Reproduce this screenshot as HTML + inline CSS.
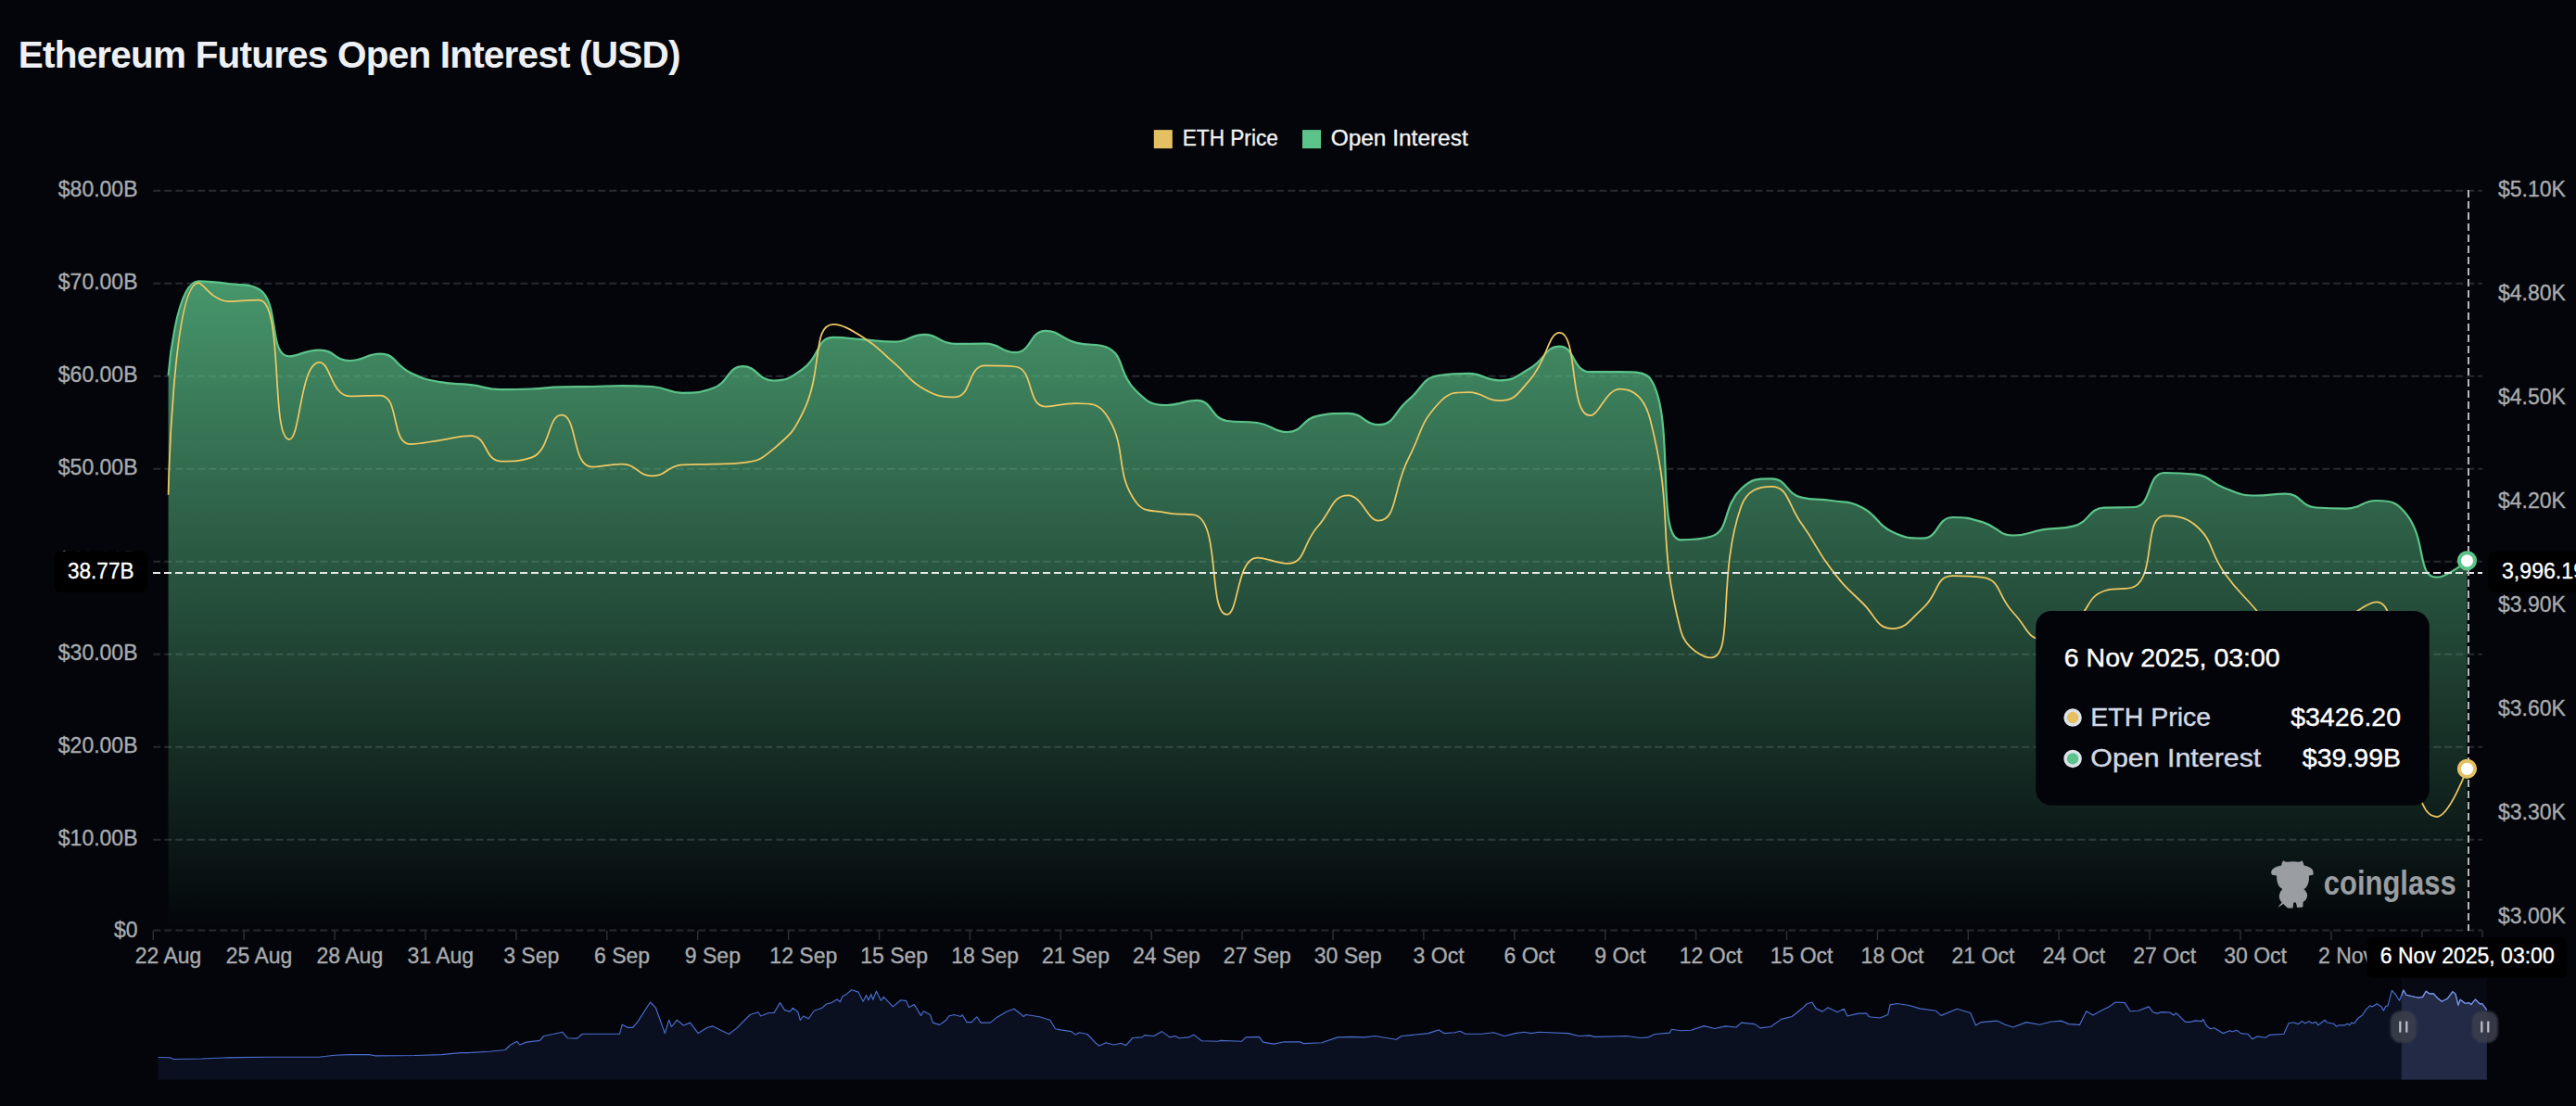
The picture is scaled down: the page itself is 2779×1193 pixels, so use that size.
<!DOCTYPE html>
<html><head><meta charset="utf-8">
<style>
html,body{margin:0;padding:0;background:#03050a;width:2779px;height:1193px;overflow:hidden}
svg{display:block}
text{font-family:"Liberation Sans", sans-serif}
.ax{font-size:23px;fill:#a9abae;stroke:#a9abae;stroke-width:0.35px}
.lb{font-size:24px;fill:#fff;stroke:#fff;stroke-width:0.35px}
.lg{font-size:23.5px;fill:#f2f2f2;stroke:#f2f2f2;stroke-width:0.35px}
.ti{font-size:40.5px;font-weight:bold;fill:#eef0f4;letter-spacing:-0.8px}
.tt{font-size:28.5px;fill:#fff;stroke:#fff;stroke-width:0.4px}
.tn{font-size:28.5px;fill:#d3d9e2;stroke:#d3d9e2;stroke-width:0.4px}
.tv{font-size:28.5px;fill:#fff;stroke:#fff;stroke-width:0.4px}
.wm{font-size:36px;font-weight:bold;fill:#9a9ea2}
</style></head>
<body>
<svg width="2779" height="1193" viewBox="0 0 2779 1193">
<defs>
<filter id="hblur" x="-50%" y="-50%" width="200%" height="200%"><feGaussianBlur stdDeviation="1.2"/></filter>
<linearGradient id="ga" gradientUnits="userSpaceOnUse" x1="0" y1="303.4" x2="0" y2="1004">
<stop offset="0" stop-color="#5cc48a" stop-opacity="0.76"/>
<stop offset="1" stop-color="#5cc48a" stop-opacity="0"/>
</linearGradient>
</defs>
<rect width="2779" height="1193" fill="#03050a"/>
<line x1="165.3" y1="205.7" x2="2678.0" y2="205.7" stroke="#272a30" stroke-width="2" stroke-dasharray="8 4"/>
<line x1="165.3" y1="305.7" x2="2678.0" y2="305.7" stroke="#272a30" stroke-width="2" stroke-dasharray="8 4"/>
<line x1="165.3" y1="405.7" x2="2678.0" y2="405.7" stroke="#272a30" stroke-width="2" stroke-dasharray="8 4"/>
<line x1="165.3" y1="505.7" x2="2678.0" y2="505.7" stroke="#272a30" stroke-width="2" stroke-dasharray="8 4"/>
<line x1="165.3" y1="605.7" x2="2678.0" y2="605.7" stroke="#272a30" stroke-width="2" stroke-dasharray="8 4"/>
<line x1="165.3" y1="705.7" x2="2678.0" y2="705.7" stroke="#272a30" stroke-width="2" stroke-dasharray="8 4"/>
<line x1="165.3" y1="805.7" x2="2678.0" y2="805.7" stroke="#272a30" stroke-width="2" stroke-dasharray="8 4"/>
<line x1="165.3" y1="905.7" x2="2678.0" y2="905.7" stroke="#272a30" stroke-width="2" stroke-dasharray="8 4"/>
<line x1="165.3" y1="1003.6" x2="2678.0" y2="1003.6" stroke="#272a30" stroke-width="2" stroke-dasharray="8 4"/>
<line x1="165.3" y1="1004" x2="165.3" y2="1014" stroke="#2c2f35" stroke-width="1.5"/>
<line x1="263.2" y1="1004" x2="263.2" y2="1014" stroke="#2c2f35" stroke-width="1.5"/>
<line x1="361.1" y1="1004" x2="361.1" y2="1014" stroke="#2c2f35" stroke-width="1.5"/>
<line x1="459.0" y1="1004" x2="459.0" y2="1014" stroke="#2c2f35" stroke-width="1.5"/>
<line x1="556.9" y1="1004" x2="556.9" y2="1014" stroke="#2c2f35" stroke-width="1.5"/>
<line x1="654.8" y1="1004" x2="654.8" y2="1014" stroke="#2c2f35" stroke-width="1.5"/>
<line x1="752.7" y1="1004" x2="752.7" y2="1014" stroke="#2c2f35" stroke-width="1.5"/>
<line x1="850.6" y1="1004" x2="850.6" y2="1014" stroke="#2c2f35" stroke-width="1.5"/>
<line x1="948.5" y1="1004" x2="948.5" y2="1014" stroke="#2c2f35" stroke-width="1.5"/>
<line x1="1046.4" y1="1004" x2="1046.4" y2="1014" stroke="#2c2f35" stroke-width="1.5"/>
<line x1="1144.3" y1="1004" x2="1144.3" y2="1014" stroke="#2c2f35" stroke-width="1.5"/>
<line x1="1242.2" y1="1004" x2="1242.2" y2="1014" stroke="#2c2f35" stroke-width="1.5"/>
<line x1="1340.1" y1="1004" x2="1340.1" y2="1014" stroke="#2c2f35" stroke-width="1.5"/>
<line x1="1438.0" y1="1004" x2="1438.0" y2="1014" stroke="#2c2f35" stroke-width="1.5"/>
<line x1="1535.9" y1="1004" x2="1535.9" y2="1014" stroke="#2c2f35" stroke-width="1.5"/>
<line x1="1633.8" y1="1004" x2="1633.8" y2="1014" stroke="#2c2f35" stroke-width="1.5"/>
<line x1="1731.7" y1="1004" x2="1731.7" y2="1014" stroke="#2c2f35" stroke-width="1.5"/>
<line x1="1829.6" y1="1004" x2="1829.6" y2="1014" stroke="#2c2f35" stroke-width="1.5"/>
<line x1="1927.5" y1="1004" x2="1927.5" y2="1014" stroke="#2c2f35" stroke-width="1.5"/>
<line x1="2025.4" y1="1004" x2="2025.4" y2="1014" stroke="#2c2f35" stroke-width="1.5"/>
<line x1="2123.3" y1="1004" x2="2123.3" y2="1014" stroke="#2c2f35" stroke-width="1.5"/>
<line x1="2221.2" y1="1004" x2="2221.2" y2="1014" stroke="#2c2f35" stroke-width="1.5"/>
<line x1="2319.1" y1="1004" x2="2319.1" y2="1014" stroke="#2c2f35" stroke-width="1.5"/>
<line x1="2417.0" y1="1004" x2="2417.0" y2="1014" stroke="#2c2f35" stroke-width="1.5"/>
<line x1="2514.9" y1="1004" x2="2514.9" y2="1014" stroke="#2c2f35" stroke-width="1.5"/>
<line x1="2612.8" y1="1004" x2="2612.8" y2="1014" stroke="#2c2f35" stroke-width="1.5"/>
<line x1="2678.0" y1="1004" x2="2678.0" y2="1014" stroke="#2c2f35" stroke-width="1.5"/>
<path d="M181.60 404.80 C181.60 404.80 189.27 303.40 214.23 303.40 C221.90 303.40 230.65 303.86 246.86 306.00 C263.28 308.16 269.87 306.00 279.49 312.00 C302.50 326.36 289.14 384.40 312.12 384.40 C321.77 384.40 328.73 377.60 344.75 377.60 C361.36 377.60 360.79 389.00 377.38 389.00 C393.42 389.00 394.83 381.70 410.01 381.70 C427.46 381.70 425.37 393.93 442.64 402.00 C458.00 409.18 458.61 409.07 475.27 412.20 C491.24 415.20 491.64 413.23 507.90 415.20 C524.27 417.18 524.13 420.10 540.53 420.10 C556.76 420.10 556.86 420.10 573.16 419.50 C589.49 418.90 589.46 417.80 605.79 417.40 C622.09 417.00 622.11 417.32 638.42 417.00 C654.74 416.67 654.74 416.10 671.05 416.10 C687.37 416.10 687.54 416.10 703.68 417.00 C720.17 417.92 719.92 423.80 736.31 423.80 C752.55 423.80 754.25 423.80 768.94 418.80 C786.88 412.69 784.35 395.10 801.57 395.10 C816.98 395.10 817.67 410.50 834.20 410.50 C850.30 410.50 852.83 407.40 866.83 397.40 C885.46 384.10 880.26 363.90 899.46 363.90 C912.89 363.90 915.77 365.20 932.09 366.40 C948.40 367.60 948.62 368.70 964.72 368.70 C981.25 368.70 981.18 360.80 997.35 360.80 C1013.81 360.80 1013.29 370.90 1029.98 370.90 C1045.92 370.90 1046.63 370.70 1062.61 370.70 C1079.26 370.70 1080.27 380.20 1095.24 380.20 C1112.90 380.20 1110.45 356.90 1127.87 356.90 C1143.08 356.90 1143.69 365.12 1160.50 369.60 C1176.32 373.82 1181.26 369.60 1193.13 374.30 C1213.89 382.52 1205.68 402.50 1225.76 421.80 C1238.31 433.85 1241.37 437.00 1258.39 437.00 C1274.00 437.00 1276.14 431.90 1291.02 431.90 C1308.77 431.90 1305.81 451.59 1323.65 454.00 C1338.44 456.00 1340.32 454.00 1356.28 456.00 C1372.95 458.09 1373.24 466.00 1388.91 466.00 C1405.87 466.00 1404.25 451.97 1421.54 448.70 C1436.88 445.80 1438.37 445.80 1454.17 445.80 C1471.00 445.80 1472.05 458.20 1486.80 458.20 C1504.68 458.20 1503.04 444.66 1519.43 431.30 C1535.67 418.06 1533.73 407.69 1552.06 405.00 C1566.36 402.90 1568.57 402.90 1584.69 402.90 C1601.20 402.90 1601.37 410.40 1617.32 410.40 C1634.00 410.40 1634.82 406.21 1649.95 397.70 C1667.45 387.86 1666.69 373.70 1682.58 373.70 C1699.32 373.70 1696.72 401.20 1715.21 401.20 C1729.35 401.20 1731.73 401.20 1747.84 401.20 C1764.36 401.20 1775.27 401.20 1780.47 408.70 C1807.90 448.27 1785.58 582.30 1813.10 582.30 C1818.21 582.30 1834.31 582.30 1845.73 578.80 C1866.94 572.30 1857.51 546.78 1878.36 527.30 C1890.14 516.30 1895.57 516.30 1910.99 516.30 C1928.20 516.30 1926.02 532.62 1943.62 536.60 C1958.65 540.00 1960.10 537.30 1976.25 540.00 C1992.73 542.75 1994.39 540.00 2008.88 547.50 C2027.02 556.89 2023.33 565.25 2041.51 573.80 C2055.96 580.60 2059.25 580.60 2074.14 580.60 C2091.88 580.60 2088.97 558.00 2106.77 558.00 C2121.60 558.00 2123.67 558.70 2139.40 563.40 C2156.30 568.45 2155.17 577.50 2172.03 577.50 C2187.80 577.50 2188.25 573.74 2204.66 571.20 C2220.88 568.69 2222.19 571.20 2237.29 567.40 C2254.82 562.99 2252.34 548.52 2269.92 547.70 C2284.97 547.00 2289.56 547.70 2302.55 547.00 C2322.19 545.94 2315.55 510.00 2335.18 510.00 C2348.18 510.00 2352.28 510.00 2367.81 511.60 C2384.91 513.36 2383.56 520.78 2400.44 526.70 C2416.19 532.23 2416.54 534.50 2433.07 534.50 C2449.17 534.50 2450.14 532.60 2465.70 532.60 C2482.77 532.60 2481.25 546.29 2498.33 547.50 C2513.88 548.60 2514.91 548.60 2530.96 548.60 C2547.54 548.60 2547.77 540.00 2563.59 540.00 C2580.40 540.00 2585.69 541.55 2596.22 554.90 C2618.32 582.90 2607.00 622.70 2628.85 622.70 C2639.63 622.70 2661.48 605.00 2661.48 605.00 L2661.48 1004.00 L181.60 1004.00 Z" fill="url(#ga)"/>
<path d="M181.60 404.80 C181.60 404.80 189.27 303.40 214.23 303.40 C221.90 303.40 230.65 303.86 246.86 306.00 C263.28 308.16 269.87 306.00 279.49 312.00 C302.50 326.36 289.14 384.40 312.12 384.40 C321.77 384.40 328.73 377.60 344.75 377.60 C361.36 377.60 360.79 389.00 377.38 389.00 C393.42 389.00 394.83 381.70 410.01 381.70 C427.46 381.70 425.37 393.93 442.64 402.00 C458.00 409.18 458.61 409.07 475.27 412.20 C491.24 415.20 491.64 413.23 507.90 415.20 C524.27 417.18 524.13 420.10 540.53 420.10 C556.76 420.10 556.86 420.10 573.16 419.50 C589.49 418.90 589.46 417.80 605.79 417.40 C622.09 417.00 622.11 417.32 638.42 417.00 C654.74 416.67 654.74 416.10 671.05 416.10 C687.37 416.10 687.54 416.10 703.68 417.00 C720.17 417.92 719.92 423.80 736.31 423.80 C752.55 423.80 754.25 423.80 768.94 418.80 C786.88 412.69 784.35 395.10 801.57 395.10 C816.98 395.10 817.67 410.50 834.20 410.50 C850.30 410.50 852.83 407.40 866.83 397.40 C885.46 384.10 880.26 363.90 899.46 363.90 C912.89 363.90 915.77 365.20 932.09 366.40 C948.40 367.60 948.62 368.70 964.72 368.70 C981.25 368.70 981.18 360.80 997.35 360.80 C1013.81 360.80 1013.29 370.90 1029.98 370.90 C1045.92 370.90 1046.63 370.70 1062.61 370.70 C1079.26 370.70 1080.27 380.20 1095.24 380.20 C1112.90 380.20 1110.45 356.90 1127.87 356.90 C1143.08 356.90 1143.69 365.12 1160.50 369.60 C1176.32 373.82 1181.26 369.60 1193.13 374.30 C1213.89 382.52 1205.68 402.50 1225.76 421.80 C1238.31 433.85 1241.37 437.00 1258.39 437.00 C1274.00 437.00 1276.14 431.90 1291.02 431.90 C1308.77 431.90 1305.81 451.59 1323.65 454.00 C1338.44 456.00 1340.32 454.00 1356.28 456.00 C1372.95 458.09 1373.24 466.00 1388.91 466.00 C1405.87 466.00 1404.25 451.97 1421.54 448.70 C1436.88 445.80 1438.37 445.80 1454.17 445.80 C1471.00 445.80 1472.05 458.20 1486.80 458.20 C1504.68 458.20 1503.04 444.66 1519.43 431.30 C1535.67 418.06 1533.73 407.69 1552.06 405.00 C1566.36 402.90 1568.57 402.90 1584.69 402.90 C1601.20 402.90 1601.37 410.40 1617.32 410.40 C1634.00 410.40 1634.82 406.21 1649.95 397.70 C1667.45 387.86 1666.69 373.70 1682.58 373.70 C1699.32 373.70 1696.72 401.20 1715.21 401.20 C1729.35 401.20 1731.73 401.20 1747.84 401.20 C1764.36 401.20 1775.27 401.20 1780.47 408.70 C1807.90 448.27 1785.58 582.30 1813.10 582.30 C1818.21 582.30 1834.31 582.30 1845.73 578.80 C1866.94 572.30 1857.51 546.78 1878.36 527.30 C1890.14 516.30 1895.57 516.30 1910.99 516.30 C1928.20 516.30 1926.02 532.62 1943.62 536.60 C1958.65 540.00 1960.10 537.30 1976.25 540.00 C1992.73 542.75 1994.39 540.00 2008.88 547.50 C2027.02 556.89 2023.33 565.25 2041.51 573.80 C2055.96 580.60 2059.25 580.60 2074.14 580.60 C2091.88 580.60 2088.97 558.00 2106.77 558.00 C2121.60 558.00 2123.67 558.70 2139.40 563.40 C2156.30 568.45 2155.17 577.50 2172.03 577.50 C2187.80 577.50 2188.25 573.74 2204.66 571.20 C2220.88 568.69 2222.19 571.20 2237.29 567.40 C2254.82 562.99 2252.34 548.52 2269.92 547.70 C2284.97 547.00 2289.56 547.70 2302.55 547.00 C2322.19 545.94 2315.55 510.00 2335.18 510.00 C2348.18 510.00 2352.28 510.00 2367.81 511.60 C2384.91 513.36 2383.56 520.78 2400.44 526.70 C2416.19 532.23 2416.54 534.50 2433.07 534.50 C2449.17 534.50 2450.14 532.60 2465.70 532.60 C2482.77 532.60 2481.25 546.29 2498.33 547.50 C2513.88 548.60 2514.91 548.60 2530.96 548.60 C2547.54 548.60 2547.77 540.00 2563.59 540.00 C2580.40 540.00 2585.69 541.55 2596.22 554.90 C2618.32 582.90 2607.00 622.70 2628.85 622.70 C2639.63 622.70 2661.48 605.00 2661.48 605.00" fill="none" stroke="#5cc48a" stroke-width="2.2" stroke-linejoin="round"/>
<path d="M181.60 533.80 C181.60 533.80 186.24 305.00 214.23 305.00 C218.87 305.00 229.26 325.00 246.86 325.00 C261.89 325.00 273.78 323.50 279.49 323.50 C306.41 323.50 291.47 474.00 312.12 474.00 C324.10 474.00 323.68 390.80 344.75 390.80 C356.31 390.80 357.79 427.40 377.38 427.40 C390.42 427.40 398.73 426.50 410.01 426.50 C431.36 426.50 421.34 479.00 442.64 479.00 C453.97 479.00 458.98 477.05 475.27 474.80 C491.61 472.55 493.68 470.00 507.90 470.00 C526.31 470.00 522.10 497.50 540.53 497.50 C554.73 497.50 561.14 497.50 573.16 493.60 C593.77 486.92 590.60 447.70 605.79 447.70 C623.23 447.70 616.76 503.50 638.42 503.50 C649.39 503.50 655.27 500.70 671.05 500.70 C687.90 500.70 687.32 513.30 703.68 513.30 C719.95 513.30 719.48 501.94 736.31 501.30 C752.11 500.70 752.63 501.25 768.94 500.70 C785.26 500.15 786.00 500.70 801.57 499.10 C818.63 497.35 820.92 495.67 834.20 484.40 C853.55 467.97 855.59 466.86 866.83 443.70 C888.22 399.61 875.47 349.90 899.46 349.90 C908.10 349.90 917.16 355.04 932.09 364.60 C949.79 375.94 948.55 377.98 964.72 391.70 C981.18 405.68 979.01 409.72 997.35 420.00 C1011.64 428.02 1016.37 428.30 1029.98 428.30 C1049.00 428.30 1043.35 394.40 1062.61 394.40 C1075.98 394.40 1082.94 394.40 1095.24 395.50 C1115.57 397.32 1107.58 438.50 1127.87 438.50 C1140.21 438.50 1144.66 435.00 1160.50 435.00 C1177.29 435.00 1184.73 435.00 1193.13 447.10 C1217.36 481.99 1201.47 509.68 1225.76 542.00 C1234.10 553.10 1241.67 549.74 1258.39 553.10 C1274.30 556.30 1283.60 553.10 1291.02 556.30 C1316.23 567.18 1303.55 662.90 1323.65 662.90 C1336.18 662.90 1334.20 601.50 1356.28 601.50 C1366.83 601.50 1376.11 607.80 1388.91 607.80 C1408.74 607.80 1404.46 587.21 1421.54 568.00 C1437.09 550.51 1437.06 534.40 1454.17 534.40 C1469.69 534.40 1474.95 561.60 1486.80 561.60 C1507.58 561.60 1502.36 527.71 1519.43 494.60 C1534.99 464.41 1530.47 458.45 1552.06 435.00 C1563.10 423.00 1568.16 423.00 1584.69 423.00 C1600.79 423.00 1602.19 432.10 1617.32 432.10 C1634.82 432.10 1637.18 424.72 1649.95 410.40 C1669.81 388.12 1669.83 358.90 1682.58 358.90 C1702.46 358.90 1692.79 448.20 1715.21 448.20 C1725.42 448.20 1732.17 419.70 1747.84 419.70 C1764.80 419.70 1774.92 431.27 1780.47 453.40 C1807.55 561.42 1785.72 572.60 1813.10 680.00 C1818.35 700.60 1838.92 709.40 1845.73 709.40 C1871.55 709.40 1851.92 620.95 1878.36 546.20 C1884.55 528.70 1896.98 524.90 1910.99 524.90 C1929.61 524.90 1928.44 544.17 1943.62 565.10 C1961.07 589.17 1958.17 591.38 1976.25 614.90 C1990.80 633.83 1991.68 633.37 2008.88 650.00 C2024.31 664.92 2024.44 678.00 2041.51 678.00 C2057.07 678.00 2059.49 669.10 2074.14 656.30 C2092.12 640.60 2087.35 621.00 2106.77 621.00 C2119.98 621.00 2126.53 621.00 2139.40 622.90 C2159.16 625.82 2154.58 643.06 2172.03 661.00 C2187.21 676.61 2187.06 690.00 2204.66 690.00 C2219.69 690.00 2222.94 683.54 2237.29 672.00 C2255.57 657.29 2250.66 644.27 2269.92 637.50 C2283.29 632.80 2293.28 637.50 2302.55 632.80 C2325.91 620.96 2312.03 556.40 2335.18 556.40 C2344.66 556.40 2356.28 556.40 2367.81 566.00 C2388.91 583.57 2382.36 593.79 2400.44 619.00 C2414.99 639.29 2416.76 638.00 2433.07 657.00 C2449.39 676.00 2446.03 687.41 2465.70 695.00 C2478.66 700.00 2484.65 700.00 2498.33 700.00 C2517.28 700.00 2513.05 681.89 2530.96 668.00 C2545.68 656.59 2557.20 649.40 2563.59 649.40 C2589.83 649.40 2575.39 726.09 2596.22 800.00 C2608.02 841.89 2609.66 881.00 2628.85 881.00 C2642.29 881.00 2661.48 829.30 2661.48 829.30" fill="none" stroke="#f0c862" stroke-width="1.75" stroke-linejoin="round"/>
<text x="148.5" y="211.7" text-anchor="end" class="ax">$80.00B</text>
<text x="148.5" y="311.7" text-anchor="end" class="ax">$70.00B</text>
<text x="148.5" y="411.7" text-anchor="end" class="ax">$60.00B</text>
<text x="148.5" y="511.7" text-anchor="end" class="ax">$50.00B</text>
<text x="148.5" y="611.7" text-anchor="end" class="ax">$40.00B</text>
<text x="148.5" y="711.7" text-anchor="end" class="ax">$30.00B</text>
<text x="148.5" y="811.7" text-anchor="end" class="ax">$20.00B</text>
<text x="148.5" y="911.7" text-anchor="end" class="ax">$10.00B</text>
<text x="148.5" y="1011.0" text-anchor="end" class="ax">$0</text>
<text x="2695" y="211.5" class="ax">$5.10K</text>
<text x="2695" y="323.5" class="ax">$4.80K</text>
<text x="2695" y="435.5" class="ax">$4.50K</text>
<text x="2695" y="547.5" class="ax">$4.20K</text>
<text x="2695" y="659.5" class="ax">$3.90K</text>
<text x="2695" y="771.5" class="ax">$3.60K</text>
<text x="2695" y="883.5" class="ax">$3.30K</text>
<text x="2695" y="995.5" class="ax">$3.00K</text>
<text x="181.6" y="1038.7" text-anchor="middle" class="ax">22 Aug</text>
<text x="279.5" y="1038.7" text-anchor="middle" class="ax">25 Aug</text>
<text x="377.4" y="1038.7" text-anchor="middle" class="ax">28 Aug</text>
<text x="475.3" y="1038.7" text-anchor="middle" class="ax">31 Aug</text>
<text x="573.2" y="1038.7" text-anchor="middle" class="ax">3 Sep</text>
<text x="671.1" y="1038.7" text-anchor="middle" class="ax">6 Sep</text>
<text x="768.9" y="1038.7" text-anchor="middle" class="ax">9 Sep</text>
<text x="866.8" y="1038.7" text-anchor="middle" class="ax">12 Sep</text>
<text x="964.7" y="1038.7" text-anchor="middle" class="ax">15 Sep</text>
<text x="1062.6" y="1038.7" text-anchor="middle" class="ax">18 Sep</text>
<text x="1160.5" y="1038.7" text-anchor="middle" class="ax">21 Sep</text>
<text x="1258.4" y="1038.7" text-anchor="middle" class="ax">24 Sep</text>
<text x="1356.3" y="1038.7" text-anchor="middle" class="ax">27 Sep</text>
<text x="1454.2" y="1038.7" text-anchor="middle" class="ax">30 Sep</text>
<text x="1552.1" y="1038.7" text-anchor="middle" class="ax">3 Oct</text>
<text x="1650.0" y="1038.7" text-anchor="middle" class="ax">6 Oct</text>
<text x="1747.8" y="1038.7" text-anchor="middle" class="ax">9 Oct</text>
<text x="1845.7" y="1038.7" text-anchor="middle" class="ax">12 Oct</text>
<text x="1943.6" y="1038.7" text-anchor="middle" class="ax">15 Oct</text>
<text x="2041.5" y="1038.7" text-anchor="middle" class="ax">18 Oct</text>
<text x="2139.4" y="1038.7" text-anchor="middle" class="ax">21 Oct</text>
<text x="2237.3" y="1038.7" text-anchor="middle" class="ax">24 Oct</text>
<text x="2335.2" y="1038.7" text-anchor="middle" class="ax">27 Oct</text>
<text x="2433.1" y="1038.7" text-anchor="middle" class="ax">30 Oct</text>
<text x="2531.0" y="1038.7" text-anchor="middle" class="ax">2 Nov</text>
<clipPath id="selclip"><rect x="2590.7" y="1040" width="92.2" height="140"/></clipPath>
<path d="M170.6 1140.5 L183.0 1140.8 L187.3 1142.5 L217.5 1142.0 L246.2 1140.8 L289.3 1140.2 L343.9 1140.2 L361.1 1138.2 L375.5 1137.6 L398.4 1137.6 L404.2 1138.8 L447.3 1138.5 L476.0 1137.6 L496.1 1135.6 L504.7 1135.6 L527.7 1134.2 L545.0 1132.5 L550.7 1127.0 L557.9 1123.3 L560.7 1127.0 L567.9 1124.1 L582.3 1122.4 L586.6 1117.5 L596.7 1115.5 L606.7 1113.2 L612.5 1119.8 L622.5 1120.1 L628.3 1115.2 L668.5 1115.2 L671.3 1105.2 L677.1 1108.3 L682.8 1108.3 L688.6 1101.1 L701.5 1081.0 L707.3 1086.8 L717.3 1114.6 L721.6 1100.3 L724.5 1107.5 L730.2 1100.3 L737.4 1106.0 L744.6 1103.1 L753.2 1114.6 L763.3 1108.3 L769.0 1106.9 L786.3 1115.5 L794.9 1108.9 L809.2 1094.5 L817.9 1091.7 L820.7 1096.0 L829.3 1092.5 L835.1 1092.5 L841.4 1081.6 L846.6 1089.6 L852.3 1091.1 L855.2 1087.3 L860.9 1091.7 L863.2 1100.3 L866.7 1096.0 L872.4 1098.8 L878.2 1090.2 L886.8 1087.3 L891.5 1083.0 L897.2 1081.6 L903.0 1077.9 L906.4 1080.7 L908.7 1075.0 L913.0 1072.4 L918.8 1067.8 L926.0 1070.1 L931.1 1080.2 L934.6 1073.6 L936.9 1078.7 L939.8 1072.4 L941.8 1078.2 L945.5 1069.2 L950.4 1079.3 L953.3 1075.3 L963.3 1085.9 L971.9 1078.7 L977.7 1079.6 L980.5 1086.5 L986.3 1083.6 L993.5 1095.4 L996.3 1090.8 L1003.5 1094.5 L1006.4 1103.1 L1013.6 1105.4 L1020.8 1100.3 L1023.6 1096.0 L1029.4 1094.5 L1036.6 1096.5 L1038.0 1094.5 L1043.2 1102.6 L1048.1 1102.6 L1053.8 1096.8 L1058.1 1103.1 L1068.2 1103.1 L1075.3 1097.4 L1086.8 1090.8 L1094.0 1088.2 L1101.2 1093.7 L1104.1 1096.5 L1106.9 1094.5 L1121.3 1096.8 L1132.8 1100.3 L1138.5 1109.8 L1144.3 1110.9 L1155.8 1112.6 L1160.1 1116.1 L1164.4 1113.8 L1173.0 1115.5 L1181.6 1124.7 L1185.9 1128.1 L1193.1 1124.7 L1201.7 1127.0 L1208.9 1125.3 L1214.7 1127.6 L1221.9 1119.5 L1231.9 1118.9 L1234.8 1116.6 L1244.8 1117.5 L1253.5 1112.6 L1262.1 1118.9 L1267.8 1117.5 L1272.1 1119.8 L1282.2 1118.9 L1287.9 1116.1 L1296.5 1122.7 L1313.8 1123.3 L1316.7 1122.4 L1339.6 1123.3 L1343.9 1118.9 L1358.3 1118.4 L1362.6 1124.1 L1374.1 1126.1 L1385.6 1123.8 L1402.8 1123.8 L1405.7 1125.6 L1425.8 1124.7 L1443.0 1118.9 L1457.4 1118.4 L1471.8 1118.9 L1483.3 1117.5 L1506.2 1121.2 L1512.0 1117.5 L1540.7 1114.6 L1552.2 1110.9 L1557.9 1114.6 L1569.4 1113.8 L1575.2 1112.3 L1580.9 1115.2 L1598.2 1115.2 L1611.5 1113.8 L1623.0 1117.5 L1634.5 1114.6 L1644.5 1113.2 L1651.7 1114.6 L1660.3 1113.2 L1691.9 1114.6 L1703.4 1117.5 L1714.9 1116.9 L1720.7 1118.4 L1755.1 1117.5 L1769.5 1119.5 L1778.1 1118.9 L1785.3 1115.5 L1801.1 1114.1 L1803.4 1110.3 L1812.6 1111.8 L1824.1 1111.2 L1838.4 1106.6 L1849.9 1109.5 L1861.4 1106.9 L1872.9 1108.0 L1878.7 1103.1 L1893.0 1104.6 L1898.8 1108.9 L1910.3 1107.5 L1921.7 1099.4 L1933.2 1096.5 L1944.7 1087.3 L1949.0 1083.0 L1954.8 1081.0 L1959.1 1087.9 L1966.3 1091.1 L1972.0 1086.8 L1982.1 1091.7 L1989.3 1088.2 L1993.0 1096.0 L2005.0 1093.1 L2013.7 1093.1 L2016.5 1096.8 L2028.0 1098.0 L2036.7 1094.5 L2039.0 1083.9 L2046.7 1082.5 L2059.6 1084.5 L2071.1 1087.9 L2088.4 1090.2 L2094.1 1095.4 L2111.3 1088.2 L2125.7 1092.5 L2131.5 1106.0 L2137.2 1102.6 L2154.4 1101.1 L2163.1 1105.2 L2171.7 1108.0 L2186.0 1102.6 L2200.4 1105.2 L2211.9 1102.3 L2223.4 1101.1 L2232.0 1104.6 L2243.5 1105.4 L2250.7 1090.8 L2257.9 1095.1 L2266.5 1090.2 L2275.1 1085.9 L2282.3 1081.0 L2292.3 1081.6 L2298.1 1090.8 L2306.7 1090.2 L2318.2 1085.9 L2322.5 1091.7 L2327.4 1093.1 L2331.8 1091.6 L2340.7 1092.0 L2345.1 1095.0 L2347.3 1092.8 L2349.5 1094.3 L2357.6 1102.4 L2362.8 1102.4 L2368.7 1100.9 L2375.3 1101.6 L2376.8 1099.4 L2380.5 1106.8 L2384.9 1109.7 L2388.6 1108.7 L2398.2 1114.6 L2405.6 1111.7 L2408.5 1112.7 L2412.9 1111.2 L2418.1 1114.9 L2424.7 1115.2 L2429.9 1120.8 L2435.1 1117.9 L2443.9 1119.3 L2448.3 1116.4 L2463.8 1115.3 L2469.0 1103.8 L2474.2 1102.8 L2479.3 1104.6 L2483.7 1101.6 L2486.7 1103.8 L2491.1 1101.6 L2494.1 1103.8 L2498.5 1102.4 L2500.7 1105.8 L2508.1 1100.2 L2510.3 1102.8 L2517.7 1104.3 L2520.6 1107.2 L2523.6 1105.8 L2529.5 1105.8 L2532.4 1104.3 L2534.6 1105.8 L2536.8 1103.1 L2539.8 1103.8 L2544.2 1097.9 L2548.6 1095.0 L2552.3 1089.1 L2556.8 1084.7 L2559.0 1086.1 L2564.1 1082.7 L2568.6 1085.4 L2571.5 1090.1 L2573.7 1085.4 L2575.9 1085.1 L2580.4 1068.4 L2584.8 1073.3 L2588.5 1079.2 L2592.9 1068.0 L2595.9 1073.3 L2600.3 1074.3 L2609.1 1076.3 L2613.6 1075.4 L2617.2 1069.2 L2620.9 1071.8 L2625.4 1071.8 L2629.8 1076.8 L2634.2 1080.2 L2640.1 1077.3 L2646.0 1069.6 L2649.0 1072.1 L2651.9 1084.2 L2654.1 1078.3 L2659.3 1082.2 L2663.7 1081.7 L2665.9 1083.6 L2670.3 1078.0 L2675.5 1083.2 L2677.7 1082.5 L2682.9 1089.5 L2682.9 1164.6 L170.6 1164.6 Z" fill="#0b1020"/>
<rect x="2590.7" y="1055.2" width="92.2" height="109.4" fill="#8090ff" fill-opacity="0.04"/>
<path d="M170.6 1140.5 L183.0 1140.8 L187.3 1142.5 L217.5 1142.0 L246.2 1140.8 L289.3 1140.2 L343.9 1140.2 L361.1 1138.2 L375.5 1137.6 L398.4 1137.6 L404.2 1138.8 L447.3 1138.5 L476.0 1137.6 L496.1 1135.6 L504.7 1135.6 L527.7 1134.2 L545.0 1132.5 L550.7 1127.0 L557.9 1123.3 L560.7 1127.0 L567.9 1124.1 L582.3 1122.4 L586.6 1117.5 L596.7 1115.5 L606.7 1113.2 L612.5 1119.8 L622.5 1120.1 L628.3 1115.2 L668.5 1115.2 L671.3 1105.2 L677.1 1108.3 L682.8 1108.3 L688.6 1101.1 L701.5 1081.0 L707.3 1086.8 L717.3 1114.6 L721.6 1100.3 L724.5 1107.5 L730.2 1100.3 L737.4 1106.0 L744.6 1103.1 L753.2 1114.6 L763.3 1108.3 L769.0 1106.9 L786.3 1115.5 L794.9 1108.9 L809.2 1094.5 L817.9 1091.7 L820.7 1096.0 L829.3 1092.5 L835.1 1092.5 L841.4 1081.6 L846.6 1089.6 L852.3 1091.1 L855.2 1087.3 L860.9 1091.7 L863.2 1100.3 L866.7 1096.0 L872.4 1098.8 L878.2 1090.2 L886.8 1087.3 L891.5 1083.0 L897.2 1081.6 L903.0 1077.9 L906.4 1080.7 L908.7 1075.0 L913.0 1072.4 L918.8 1067.8 L926.0 1070.1 L931.1 1080.2 L934.6 1073.6 L936.9 1078.7 L939.8 1072.4 L941.8 1078.2 L945.5 1069.2 L950.4 1079.3 L953.3 1075.3 L963.3 1085.9 L971.9 1078.7 L977.7 1079.6 L980.5 1086.5 L986.3 1083.6 L993.5 1095.4 L996.3 1090.8 L1003.5 1094.5 L1006.4 1103.1 L1013.6 1105.4 L1020.8 1100.3 L1023.6 1096.0 L1029.4 1094.5 L1036.6 1096.5 L1038.0 1094.5 L1043.2 1102.6 L1048.1 1102.6 L1053.8 1096.8 L1058.1 1103.1 L1068.2 1103.1 L1075.3 1097.4 L1086.8 1090.8 L1094.0 1088.2 L1101.2 1093.7 L1104.1 1096.5 L1106.9 1094.5 L1121.3 1096.8 L1132.8 1100.3 L1138.5 1109.8 L1144.3 1110.9 L1155.8 1112.6 L1160.1 1116.1 L1164.4 1113.8 L1173.0 1115.5 L1181.6 1124.7 L1185.9 1128.1 L1193.1 1124.7 L1201.7 1127.0 L1208.9 1125.3 L1214.7 1127.6 L1221.9 1119.5 L1231.9 1118.9 L1234.8 1116.6 L1244.8 1117.5 L1253.5 1112.6 L1262.1 1118.9 L1267.8 1117.5 L1272.1 1119.8 L1282.2 1118.9 L1287.9 1116.1 L1296.5 1122.7 L1313.8 1123.3 L1316.7 1122.4 L1339.6 1123.3 L1343.9 1118.9 L1358.3 1118.4 L1362.6 1124.1 L1374.1 1126.1 L1385.6 1123.8 L1402.8 1123.8 L1405.7 1125.6 L1425.8 1124.7 L1443.0 1118.9 L1457.4 1118.4 L1471.8 1118.9 L1483.3 1117.5 L1506.2 1121.2 L1512.0 1117.5 L1540.7 1114.6 L1552.2 1110.9 L1557.9 1114.6 L1569.4 1113.8 L1575.2 1112.3 L1580.9 1115.2 L1598.2 1115.2 L1611.5 1113.8 L1623.0 1117.5 L1634.5 1114.6 L1644.5 1113.2 L1651.7 1114.6 L1660.3 1113.2 L1691.9 1114.6 L1703.4 1117.5 L1714.9 1116.9 L1720.7 1118.4 L1755.1 1117.5 L1769.5 1119.5 L1778.1 1118.9 L1785.3 1115.5 L1801.1 1114.1 L1803.4 1110.3 L1812.6 1111.8 L1824.1 1111.2 L1838.4 1106.6 L1849.9 1109.5 L1861.4 1106.9 L1872.9 1108.0 L1878.7 1103.1 L1893.0 1104.6 L1898.8 1108.9 L1910.3 1107.5 L1921.7 1099.4 L1933.2 1096.5 L1944.7 1087.3 L1949.0 1083.0 L1954.8 1081.0 L1959.1 1087.9 L1966.3 1091.1 L1972.0 1086.8 L1982.1 1091.7 L1989.3 1088.2 L1993.0 1096.0 L2005.0 1093.1 L2013.7 1093.1 L2016.5 1096.8 L2028.0 1098.0 L2036.7 1094.5 L2039.0 1083.9 L2046.7 1082.5 L2059.6 1084.5 L2071.1 1087.9 L2088.4 1090.2 L2094.1 1095.4 L2111.3 1088.2 L2125.7 1092.5 L2131.5 1106.0 L2137.2 1102.6 L2154.4 1101.1 L2163.1 1105.2 L2171.7 1108.0 L2186.0 1102.6 L2200.4 1105.2 L2211.9 1102.3 L2223.4 1101.1 L2232.0 1104.6 L2243.5 1105.4 L2250.7 1090.8 L2257.9 1095.1 L2266.5 1090.2 L2275.1 1085.9 L2282.3 1081.0 L2292.3 1081.6 L2298.1 1090.8 L2306.7 1090.2 L2318.2 1085.9 L2322.5 1091.7 L2327.4 1093.1 L2331.8 1091.6 L2340.7 1092.0 L2345.1 1095.0 L2347.3 1092.8 L2349.5 1094.3 L2357.6 1102.4 L2362.8 1102.4 L2368.7 1100.9 L2375.3 1101.6 L2376.8 1099.4 L2380.5 1106.8 L2384.9 1109.7 L2388.6 1108.7 L2398.2 1114.6 L2405.6 1111.7 L2408.5 1112.7 L2412.9 1111.2 L2418.1 1114.9 L2424.7 1115.2 L2429.9 1120.8 L2435.1 1117.9 L2443.9 1119.3 L2448.3 1116.4 L2463.8 1115.3 L2469.0 1103.8 L2474.2 1102.8 L2479.3 1104.6 L2483.7 1101.6 L2486.7 1103.8 L2491.1 1101.6 L2494.1 1103.8 L2498.5 1102.4 L2500.7 1105.8 L2508.1 1100.2 L2510.3 1102.8 L2517.7 1104.3 L2520.6 1107.2 L2523.6 1105.8 L2529.5 1105.8 L2532.4 1104.3 L2534.6 1105.8 L2536.8 1103.1 L2539.8 1103.8 L2544.2 1097.9 L2548.6 1095.0 L2552.3 1089.1 L2556.8 1084.7 L2559.0 1086.1 L2564.1 1082.7 L2568.6 1085.4 L2571.5 1090.1 L2573.7 1085.4 L2575.9 1085.1 L2580.4 1068.4 L2584.8 1073.3 L2588.5 1079.2 L2592.9 1068.0 L2595.9 1073.3 L2600.3 1074.3 L2609.1 1076.3 L2613.6 1075.4 L2617.2 1069.2 L2620.9 1071.8 L2625.4 1071.8 L2629.8 1076.8 L2634.2 1080.2 L2640.1 1077.3 L2646.0 1069.6 L2649.0 1072.1 L2651.9 1084.2 L2654.1 1078.3 L2659.3 1082.2 L2663.7 1081.7 L2665.9 1083.6 L2670.3 1078.0 L2675.5 1083.2 L2677.7 1082.5 L2682.9 1089.5 L2682.9 1164.6 L170.6 1164.6 Z" fill="#232a46" clip-path="url(#selclip)"/>
<path d="M170.6 1140.5 L183.0 1140.8 L187.3 1142.5 L217.5 1142.0 L246.2 1140.8 L289.3 1140.2 L343.9 1140.2 L361.1 1138.2 L375.5 1137.6 L398.4 1137.6 L404.2 1138.8 L447.3 1138.5 L476.0 1137.6 L496.1 1135.6 L504.7 1135.6 L527.7 1134.2 L545.0 1132.5 L550.7 1127.0 L557.9 1123.3 L560.7 1127.0 L567.9 1124.1 L582.3 1122.4 L586.6 1117.5 L596.7 1115.5 L606.7 1113.2 L612.5 1119.8 L622.5 1120.1 L628.3 1115.2 L668.5 1115.2 L671.3 1105.2 L677.1 1108.3 L682.8 1108.3 L688.6 1101.1 L701.5 1081.0 L707.3 1086.8 L717.3 1114.6 L721.6 1100.3 L724.5 1107.5 L730.2 1100.3 L737.4 1106.0 L744.6 1103.1 L753.2 1114.6 L763.3 1108.3 L769.0 1106.9 L786.3 1115.5 L794.9 1108.9 L809.2 1094.5 L817.9 1091.7 L820.7 1096.0 L829.3 1092.5 L835.1 1092.5 L841.4 1081.6 L846.6 1089.6 L852.3 1091.1 L855.2 1087.3 L860.9 1091.7 L863.2 1100.3 L866.7 1096.0 L872.4 1098.8 L878.2 1090.2 L886.8 1087.3 L891.5 1083.0 L897.2 1081.6 L903.0 1077.9 L906.4 1080.7 L908.7 1075.0 L913.0 1072.4 L918.8 1067.8 L926.0 1070.1 L931.1 1080.2 L934.6 1073.6 L936.9 1078.7 L939.8 1072.4 L941.8 1078.2 L945.5 1069.2 L950.4 1079.3 L953.3 1075.3 L963.3 1085.9 L971.9 1078.7 L977.7 1079.6 L980.5 1086.5 L986.3 1083.6 L993.5 1095.4 L996.3 1090.8 L1003.5 1094.5 L1006.4 1103.1 L1013.6 1105.4 L1020.8 1100.3 L1023.6 1096.0 L1029.4 1094.5 L1036.6 1096.5 L1038.0 1094.5 L1043.2 1102.6 L1048.1 1102.6 L1053.8 1096.8 L1058.1 1103.1 L1068.2 1103.1 L1075.3 1097.4 L1086.8 1090.8 L1094.0 1088.2 L1101.2 1093.7 L1104.1 1096.5 L1106.9 1094.5 L1121.3 1096.8 L1132.8 1100.3 L1138.5 1109.8 L1144.3 1110.9 L1155.8 1112.6 L1160.1 1116.1 L1164.4 1113.8 L1173.0 1115.5 L1181.6 1124.7 L1185.9 1128.1 L1193.1 1124.7 L1201.7 1127.0 L1208.9 1125.3 L1214.7 1127.6 L1221.9 1119.5 L1231.9 1118.9 L1234.8 1116.6 L1244.8 1117.5 L1253.5 1112.6 L1262.1 1118.9 L1267.8 1117.5 L1272.1 1119.8 L1282.2 1118.9 L1287.9 1116.1 L1296.5 1122.7 L1313.8 1123.3 L1316.7 1122.4 L1339.6 1123.3 L1343.9 1118.9 L1358.3 1118.4 L1362.6 1124.1 L1374.1 1126.1 L1385.6 1123.8 L1402.8 1123.8 L1405.7 1125.6 L1425.8 1124.7 L1443.0 1118.9 L1457.4 1118.4 L1471.8 1118.9 L1483.3 1117.5 L1506.2 1121.2 L1512.0 1117.5 L1540.7 1114.6 L1552.2 1110.9 L1557.9 1114.6 L1569.4 1113.8 L1575.2 1112.3 L1580.9 1115.2 L1598.2 1115.2 L1611.5 1113.8 L1623.0 1117.5 L1634.5 1114.6 L1644.5 1113.2 L1651.7 1114.6 L1660.3 1113.2 L1691.9 1114.6 L1703.4 1117.5 L1714.9 1116.9 L1720.7 1118.4 L1755.1 1117.5 L1769.5 1119.5 L1778.1 1118.9 L1785.3 1115.5 L1801.1 1114.1 L1803.4 1110.3 L1812.6 1111.8 L1824.1 1111.2 L1838.4 1106.6 L1849.9 1109.5 L1861.4 1106.9 L1872.9 1108.0 L1878.7 1103.1 L1893.0 1104.6 L1898.8 1108.9 L1910.3 1107.5 L1921.7 1099.4 L1933.2 1096.5 L1944.7 1087.3 L1949.0 1083.0 L1954.8 1081.0 L1959.1 1087.9 L1966.3 1091.1 L1972.0 1086.8 L1982.1 1091.7 L1989.3 1088.2 L1993.0 1096.0 L2005.0 1093.1 L2013.7 1093.1 L2016.5 1096.8 L2028.0 1098.0 L2036.7 1094.5 L2039.0 1083.9 L2046.7 1082.5 L2059.6 1084.5 L2071.1 1087.9 L2088.4 1090.2 L2094.1 1095.4 L2111.3 1088.2 L2125.7 1092.5 L2131.5 1106.0 L2137.2 1102.6 L2154.4 1101.1 L2163.1 1105.2 L2171.7 1108.0 L2186.0 1102.6 L2200.4 1105.2 L2211.9 1102.3 L2223.4 1101.1 L2232.0 1104.6 L2243.5 1105.4 L2250.7 1090.8 L2257.9 1095.1 L2266.5 1090.2 L2275.1 1085.9 L2282.3 1081.0 L2292.3 1081.6 L2298.1 1090.8 L2306.7 1090.2 L2318.2 1085.9 L2322.5 1091.7 L2327.4 1093.1 L2331.8 1091.6 L2340.7 1092.0 L2345.1 1095.0 L2347.3 1092.8 L2349.5 1094.3 L2357.6 1102.4 L2362.8 1102.4 L2368.7 1100.9 L2375.3 1101.6 L2376.8 1099.4 L2380.5 1106.8 L2384.9 1109.7 L2388.6 1108.7 L2398.2 1114.6 L2405.6 1111.7 L2408.5 1112.7 L2412.9 1111.2 L2418.1 1114.9 L2424.7 1115.2 L2429.9 1120.8 L2435.1 1117.9 L2443.9 1119.3 L2448.3 1116.4 L2463.8 1115.3 L2469.0 1103.8 L2474.2 1102.8 L2479.3 1104.6 L2483.7 1101.6 L2486.7 1103.8 L2491.1 1101.6 L2494.1 1103.8 L2498.5 1102.4 L2500.7 1105.8 L2508.1 1100.2 L2510.3 1102.8 L2517.7 1104.3 L2520.6 1107.2 L2523.6 1105.8 L2529.5 1105.8 L2532.4 1104.3 L2534.6 1105.8 L2536.8 1103.1 L2539.8 1103.8 L2544.2 1097.9 L2548.6 1095.0 L2552.3 1089.1 L2556.8 1084.7 L2559.0 1086.1 L2564.1 1082.7 L2568.6 1085.4 L2571.5 1090.1 L2573.7 1085.4 L2575.9 1085.1 L2580.4 1068.4 L2584.8 1073.3 L2588.5 1079.2 L2592.9 1068.0 L2595.9 1073.3 L2600.3 1074.3 L2609.1 1076.3 L2613.6 1075.4 L2617.2 1069.2 L2620.9 1071.8 L2625.4 1071.8 L2629.8 1076.8 L2634.2 1080.2 L2640.1 1077.3 L2646.0 1069.6 L2649.0 1072.1 L2651.9 1084.2 L2654.1 1078.3 L2659.3 1082.2 L2663.7 1081.7 L2665.9 1083.6 L2670.3 1078.0 L2675.5 1083.2 L2677.7 1082.5 L2682.9 1089.5" fill="none" stroke="#4b6fd1" stroke-width="1.15" stroke-linejoin="round"/>
<path d="M170.6 1140.5 L183.0 1140.8 L187.3 1142.5 L217.5 1142.0 L246.2 1140.8 L289.3 1140.2 L343.9 1140.2 L361.1 1138.2 L375.5 1137.6 L398.4 1137.6 L404.2 1138.8 L447.3 1138.5 L476.0 1137.6 L496.1 1135.6 L504.7 1135.6 L527.7 1134.2 L545.0 1132.5 L550.7 1127.0 L557.9 1123.3 L560.7 1127.0 L567.9 1124.1 L582.3 1122.4 L586.6 1117.5 L596.7 1115.5 L606.7 1113.2 L612.5 1119.8 L622.5 1120.1 L628.3 1115.2 L668.5 1115.2 L671.3 1105.2 L677.1 1108.3 L682.8 1108.3 L688.6 1101.1 L701.5 1081.0 L707.3 1086.8 L717.3 1114.6 L721.6 1100.3 L724.5 1107.5 L730.2 1100.3 L737.4 1106.0 L744.6 1103.1 L753.2 1114.6 L763.3 1108.3 L769.0 1106.9 L786.3 1115.5 L794.9 1108.9 L809.2 1094.5 L817.9 1091.7 L820.7 1096.0 L829.3 1092.5 L835.1 1092.5 L841.4 1081.6 L846.6 1089.6 L852.3 1091.1 L855.2 1087.3 L860.9 1091.7 L863.2 1100.3 L866.7 1096.0 L872.4 1098.8 L878.2 1090.2 L886.8 1087.3 L891.5 1083.0 L897.2 1081.6 L903.0 1077.9 L906.4 1080.7 L908.7 1075.0 L913.0 1072.4 L918.8 1067.8 L926.0 1070.1 L931.1 1080.2 L934.6 1073.6 L936.9 1078.7 L939.8 1072.4 L941.8 1078.2 L945.5 1069.2 L950.4 1079.3 L953.3 1075.3 L963.3 1085.9 L971.9 1078.7 L977.7 1079.6 L980.5 1086.5 L986.3 1083.6 L993.5 1095.4 L996.3 1090.8 L1003.5 1094.5 L1006.4 1103.1 L1013.6 1105.4 L1020.8 1100.3 L1023.6 1096.0 L1029.4 1094.5 L1036.6 1096.5 L1038.0 1094.5 L1043.2 1102.6 L1048.1 1102.6 L1053.8 1096.8 L1058.1 1103.1 L1068.2 1103.1 L1075.3 1097.4 L1086.8 1090.8 L1094.0 1088.2 L1101.2 1093.7 L1104.1 1096.5 L1106.9 1094.5 L1121.3 1096.8 L1132.8 1100.3 L1138.5 1109.8 L1144.3 1110.9 L1155.8 1112.6 L1160.1 1116.1 L1164.4 1113.8 L1173.0 1115.5 L1181.6 1124.7 L1185.9 1128.1 L1193.1 1124.7 L1201.7 1127.0 L1208.9 1125.3 L1214.7 1127.6 L1221.9 1119.5 L1231.9 1118.9 L1234.8 1116.6 L1244.8 1117.5 L1253.5 1112.6 L1262.1 1118.9 L1267.8 1117.5 L1272.1 1119.8 L1282.2 1118.9 L1287.9 1116.1 L1296.5 1122.7 L1313.8 1123.3 L1316.7 1122.4 L1339.6 1123.3 L1343.9 1118.9 L1358.3 1118.4 L1362.6 1124.1 L1374.1 1126.1 L1385.6 1123.8 L1402.8 1123.8 L1405.7 1125.6 L1425.8 1124.7 L1443.0 1118.9 L1457.4 1118.4 L1471.8 1118.9 L1483.3 1117.5 L1506.2 1121.2 L1512.0 1117.5 L1540.7 1114.6 L1552.2 1110.9 L1557.9 1114.6 L1569.4 1113.8 L1575.2 1112.3 L1580.9 1115.2 L1598.2 1115.2 L1611.5 1113.8 L1623.0 1117.5 L1634.5 1114.6 L1644.5 1113.2 L1651.7 1114.6 L1660.3 1113.2 L1691.9 1114.6 L1703.4 1117.5 L1714.9 1116.9 L1720.7 1118.4 L1755.1 1117.5 L1769.5 1119.5 L1778.1 1118.9 L1785.3 1115.5 L1801.1 1114.1 L1803.4 1110.3 L1812.6 1111.8 L1824.1 1111.2 L1838.4 1106.6 L1849.9 1109.5 L1861.4 1106.9 L1872.9 1108.0 L1878.7 1103.1 L1893.0 1104.6 L1898.8 1108.9 L1910.3 1107.5 L1921.7 1099.4 L1933.2 1096.5 L1944.7 1087.3 L1949.0 1083.0 L1954.8 1081.0 L1959.1 1087.9 L1966.3 1091.1 L1972.0 1086.8 L1982.1 1091.7 L1989.3 1088.2 L1993.0 1096.0 L2005.0 1093.1 L2013.7 1093.1 L2016.5 1096.8 L2028.0 1098.0 L2036.7 1094.5 L2039.0 1083.9 L2046.7 1082.5 L2059.6 1084.5 L2071.1 1087.9 L2088.4 1090.2 L2094.1 1095.4 L2111.3 1088.2 L2125.7 1092.5 L2131.5 1106.0 L2137.2 1102.6 L2154.4 1101.1 L2163.1 1105.2 L2171.7 1108.0 L2186.0 1102.6 L2200.4 1105.2 L2211.9 1102.3 L2223.4 1101.1 L2232.0 1104.6 L2243.5 1105.4 L2250.7 1090.8 L2257.9 1095.1 L2266.5 1090.2 L2275.1 1085.9 L2282.3 1081.0 L2292.3 1081.6 L2298.1 1090.8 L2306.7 1090.2 L2318.2 1085.9 L2322.5 1091.7 L2327.4 1093.1 L2331.8 1091.6 L2340.7 1092.0 L2345.1 1095.0 L2347.3 1092.8 L2349.5 1094.3 L2357.6 1102.4 L2362.8 1102.4 L2368.7 1100.9 L2375.3 1101.6 L2376.8 1099.4 L2380.5 1106.8 L2384.9 1109.7 L2388.6 1108.7 L2398.2 1114.6 L2405.6 1111.7 L2408.5 1112.7 L2412.9 1111.2 L2418.1 1114.9 L2424.7 1115.2 L2429.9 1120.8 L2435.1 1117.9 L2443.9 1119.3 L2448.3 1116.4 L2463.8 1115.3 L2469.0 1103.8 L2474.2 1102.8 L2479.3 1104.6 L2483.7 1101.6 L2486.7 1103.8 L2491.1 1101.6 L2494.1 1103.8 L2498.5 1102.4 L2500.7 1105.8 L2508.1 1100.2 L2510.3 1102.8 L2517.7 1104.3 L2520.6 1107.2 L2523.6 1105.8 L2529.5 1105.8 L2532.4 1104.3 L2534.6 1105.8 L2536.8 1103.1 L2539.8 1103.8 L2544.2 1097.9 L2548.6 1095.0 L2552.3 1089.1 L2556.8 1084.7 L2559.0 1086.1 L2564.1 1082.7 L2568.6 1085.4 L2571.5 1090.1 L2573.7 1085.4 L2575.9 1085.1 L2580.4 1068.4 L2584.8 1073.3 L2588.5 1079.2 L2592.9 1068.0 L2595.9 1073.3 L2600.3 1074.3 L2609.1 1076.3 L2613.6 1075.4 L2617.2 1069.2 L2620.9 1071.8 L2625.4 1071.8 L2629.8 1076.8 L2634.2 1080.2 L2640.1 1077.3 L2646.0 1069.6 L2649.0 1072.1 L2651.9 1084.2 L2654.1 1078.3 L2659.3 1082.2 L2663.7 1081.7 L2665.9 1083.6 L2670.3 1078.0 L2675.5 1083.2 L2677.7 1082.5 L2682.9 1089.5" fill="none" stroke="#7f98e6" stroke-width="1.15" stroke-linejoin="round" clip-path="url(#selclip)"/>
<rect x="2578.8" y="1090.6" width="28" height="34" rx="11" fill="#3a3d4a" fill-opacity="0.9" filter="url(#hblur)"/>
<rect x="2588.2" y="1101.6" width="2.2" height="12" fill="#c0c2ca"/>
<rect x="2595.2" y="1101.6" width="2.2" height="12" fill="#c0c2ca"/>
<rect x="2666.8" y="1090.6" width="28" height="34" rx="11" fill="#3a3d4a" fill-opacity="0.9" filter="url(#hblur)"/>
<rect x="2676.2" y="1101.6" width="2.2" height="12" fill="#c0c2ca"/>
<rect x="2683.2" y="1101.6" width="2.2" height="12" fill="#c0c2ca"/>
<line x1="165" y1="618" x2="2678" y2="618" stroke="#e6e6e6" stroke-width="2" stroke-dasharray="8 4"/>
<line x1="2663" y1="205" x2="2663" y2="1004" stroke="#b8b8b8" stroke-width="2" stroke-dasharray="8 4"/>
<rect x="58.2" y="594.4" width="101" height="44.6" rx="7" fill="#000"/>
<text x="73" y="624.3" class="lb" textLength="71.5" lengthAdjust="spacingAndGlyphs">38.77B</text>
<rect x="2684.5" y="594.8" width="120" height="44.1" rx="7" fill="#000"/>
<text x="2699" y="623.7" class="lb" textLength="90" lengthAdjust="spacingAndGlyphs">3,996.19</text>
<circle cx="2661.5" cy="604.8" r="8.6" fill="#fff" stroke="#5cc48a" stroke-width="4"/>
<circle cx="2661.5" cy="829.3" r="8.6" fill="#fff" stroke="#e5c063" stroke-width="4"/>
<rect x="2553.4" y="1011.1" width="215.6" height="43.1" rx="6" fill="#000"/>
<text x="2661.7" y="1039.2" text-anchor="middle" class="lb" style="font-size:23px">6 Nov 2025, 03:00</text>
<path transform="translate(2430 910) scale(0.08929)" fill="#9a9ea2" d="M350 262 Q355 225 372 203 Q395 222 420 222 Q480 212 560 220 Q585 215 600 203 Q615 230 622 262 Q700 275 728 320 Q742 360 730 378 L682 385 Q690 470 650 525 Q638 540 620 548 Q662 585 662 628 Q660 680 612 705 L608 768 L540 772 L525 712 L495 712 L488 778 L425 778 L372 728 L308 772 Q330 735 355 712 Q322 680 322 628 Q325 585 362 550 Q338 535 325 520 Q290 470 292 385 L238 378 Q218 365 228 330 Q250 280 350 262 Z"/>
<text x="2506.8" y="965.4" class="wm" textLength="142.8" lengthAdjust="spacingAndGlyphs">coinglass</text>
<rect x="2196.2" y="658.9" width="424.6" height="209.9" rx="17" fill="#03040a"/>
<text x="2226.8" y="718.9" class="tt">6 Nov 2025, 03:00</text>
<circle cx="2236.1" cy="774.1" r="8" fill="#e5c063" stroke="#dde2ea" stroke-width="3.5"/>
<circle cx="2236.1" cy="818.4" r="8" fill="#5cc48a" stroke="#dde2ea" stroke-width="3.5"/>
<text x="2255.3" y="783.2" class="tn">ETH Price</text>
<text x="2255.3" y="827.2" class="tn" textLength="184" lengthAdjust="spacingAndGlyphs">Open Interest</text>
<text x="2590" y="783.2" text-anchor="end" class="tv">$3426.20</text>
<text x="2590" y="827.2" text-anchor="end" class="tv">$39.99B</text>
<rect x="1244.8" y="140.1" width="20" height="20" fill="#e5c063"/>
<text x="1275.8" y="157" class="lg" textLength="103" lengthAdjust="spacingAndGlyphs">ETH Price</text>
<rect x="1405" y="140.1" width="20" height="20" fill="#5cc48a"/>
<text x="1435.7" y="157" class="lg" textLength="148" lengthAdjust="spacingAndGlyphs">Open Interest</text>
<text x="19.8" y="72.8" class="ti">Ethereum Futures Open Interest (USD)</text>
</svg>
</body></html>
